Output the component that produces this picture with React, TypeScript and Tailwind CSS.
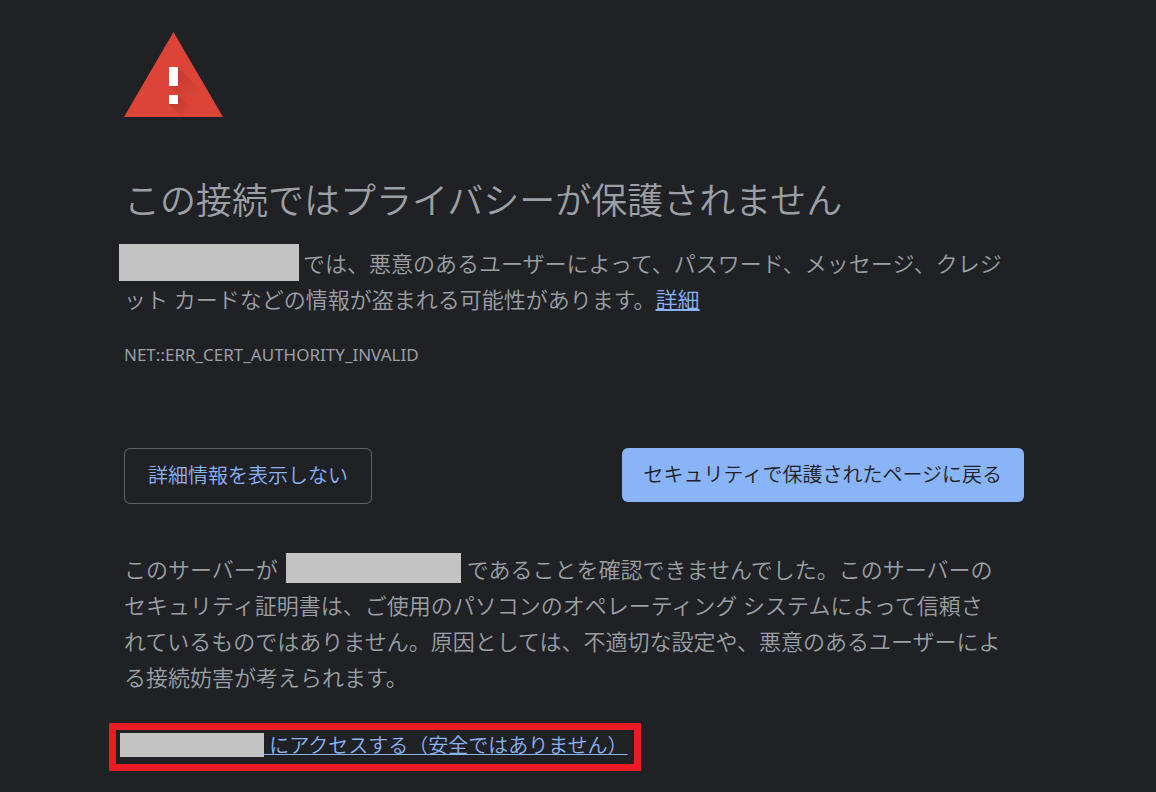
import React from 'react';

function WarningIcon() {
  return (
    <svg className="block h-[85px] w-[99px]" viewBox="0 0 99 85" role="img" aria-label="警告">
      <defs>
        <linearGradient id="shade" gradientUnits="userSpaceOnUse" x1="50" y1="44" x2="72" y2="66">
          <stop offset="0" stopColor="#c53c30" />
          <stop offset="1" stopColor="#db4437" />
        </linearGradient>
        <linearGradient id="shadeLow" gradientUnits="userSpaceOnUse" x1="50" y1="66" x2="64" y2="82">
          <stop offset="0" stopColor="#bd3a2e" />
          <stop offset="1" stopColor="#db4437" />
        </linearGradient>
      </defs>
      <path d="M49.500 0 99 85H0z" fill="#db4437" />
      <path d="M54 35 86 67 96 85H76L45 54z" fill="url(#shade)" />
      <path d="M54 63 76 85H58L45 72z" fill="url(#shadeLow)" />
      <path d="M45 35h9v19h-9zM45 63h9v9h-9z" fill="#fff" />
    </svg>
  );
}

export default function App() {
  return (
    <div className="min-h-screen bg-[#202124] pr-2 font-['Noto_Sans','Noto_Sans_CJK_JP',sans-serif] text-[#9aa0a6]">
      <main className="mx-auto w-full max-w-[900px] pt-8 pb-5 font-[350]">
        <WarningIcon />
        <h1 className="mt-[60px] text-[36px] leading-[48px]">この接続ではプライバシーが保護されません</h1>
        <p className="mt-5 text-[22px] leading-9">
          <span className="-mt-2 mr-1 -ml-[5px] inline-block h-[37px] w-[180px] bg-[#c3c3c3] align-middle" />
          では、悪意のあるユーザーによって、パスワード、メッセージ、クレジ
          <br />
          ット カードなどの情報が盗まれる可能性があります。
          <a href="#details" className="text-[#8ab4f8] underline decoration-2">詳細</a>
        </p>
        <p className="mt-[26px] text-[17px] leading-6 font-normal">NET::ERR_CERT_AUTHORITY_INVALID</p>
        <div className="mt-[81px] flex flex-wrap items-start justify-between gap-4 text-[20px] leading-[30px]">
          <button type="button" className="rounded-md border border-[#5f6368] px-[23px] py-3 text-[#8ab4f8]">
            詳細情報を表示しない
          </button>
          <button type="button" className="rounded-md bg-[#8ab4f8] px-[22px] py-3 text-[#202124]">
            セキュリティで保護されたページに戻る
          </button>
        </div>
        <p className="mt-[47px] text-[22px] leading-9">
          このサーバーが
          <span className="-mt-2 mr-1.5 ml-2 inline-block h-[30px] w-[175px] bg-[#c3c3c3] align-middle" />
          であることを確認できませんでした。このサーバーの
          <br />
          セキュリティ証明書は、ご使用のパソコンのオペレーティング システムによって信頼さ
          <br />
          れているものではありません。原因としては、不適切な設定や、悪意のあるユーザーによ
          <br />
          る接続妨害が考えられます。
        </p>
        <div className="mt-7 -ml-[15px] flex w-fit items-start border-[7px] border-[#ed1c24] pt-[3px] pr-[6px] pb-px pl-1 text-[20px] leading-[30px]">
          <span className="h-6 w-36 bg-[#c3c3c3]" />
          <a href="#proceed" className="-mt-0.5 whitespace-pre pb-0.5 text-[#8ab4f8] underline decoration-1"> にアクセスする（安全ではありません）</a>
        </div>
      </main>
    </div>
  );
}
